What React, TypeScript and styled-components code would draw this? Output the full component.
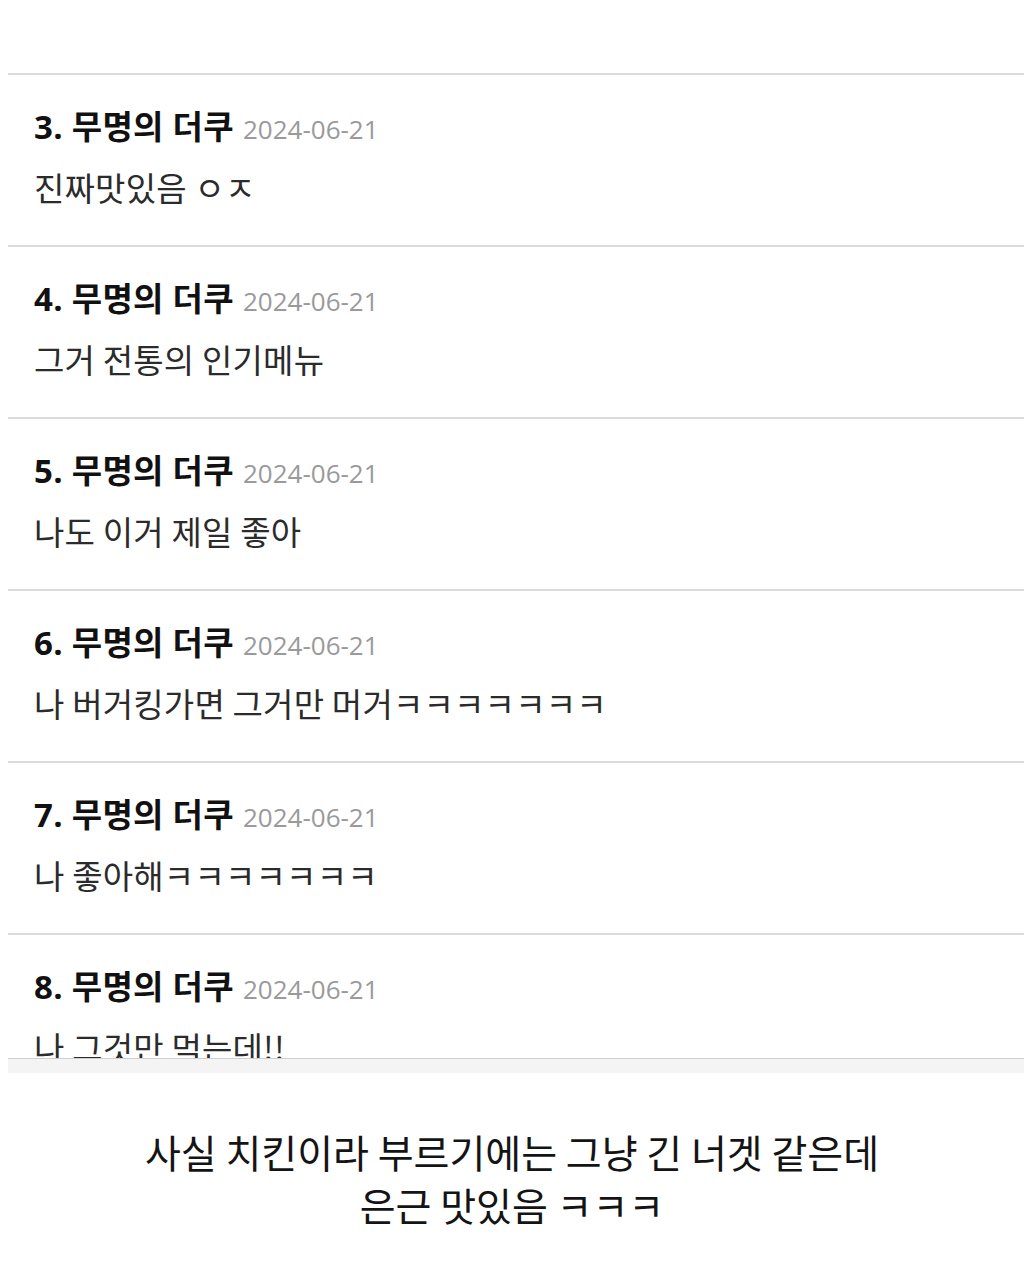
import React from "react";
import styled, { createGlobalStyle } from "styled-components";

const Global = createGlobalStyle`
  html, body { margin: 0; padding: 0; background: #ffffff; }
  body { font-family: "Open Sans", "Noto Sans CJK KR", sans-serif; }
`;

const Page = styled.div`
  width: 1024px;
  height: 1280px;
  background: #fff;
  display: flex;
  flex-direction: column;
`;

const Shot = styled.div`
  height: 1058px;
  overflow: hidden;
  padding-top: 73px;
  padding-left: 8px;
  box-sizing: border-box;
`;

const Comment = styled.div`
  height: 172px;
  box-sizing: border-box;
  border-top: 2px solid #dcdcdc;
  padding: 32px 0 0 26px;
  display: flex;
  flex-direction: column;
  gap: 20px;
`;

const Head = styled.div`
  display: flex;
  align-items: baseline;
  gap: 9px;
  height: 40px;
  line-height: 40px;
`;

const Name = styled.span`
  font-family: "Open Sans", "Noto Sans CJK KR", sans-serif;
  font-weight: 700;
  font-size: 33px;
  color: #111;
  letter-spacing: 0.3px;
`;

const DateText = styled.span`
  font-family: "Open Sans", "Noto Sans", sans-serif;
  font-size: 26px;
  color: #9a9a9a;
`;

const Body = styled.div`
  font-family: "Noto Sans CJK KR", sans-serif;
  font-size: 33px;
  line-height: 40px;
  letter-spacing: 0.2px;
  color: #2b2b2b;
  white-space: nowrap;
`;

const Band = styled.div`
  margin-left: 8px;
  height: 14px;
  border-top: 1px solid #cfcfcf;
  background: #f4f4f4;
`;

const Caption = styled.div`
  margin-top: 52px;
  text-align: center;
  font-family: "Noto Sans CJK KR", sans-serif;
  font-size: 39px;
  line-height: 53px;
  color: #141414;
`;

const comments = [
  { n: 3, text: "진짜맛있음 ㅇㅈ" },
  { n: 4, text: "그거 전통의 인기메뉴" },
  { n: 5, text: "나도 이거 제일 좋아" },
  { n: 6, text: "나 버거킹가면 그거만 머거ㅋㅋㅋㅋㅋㅋㅋ" },
  { n: 7, text: "나 좋아해ㅋㅋㅋㅋㅋㅋㅋ" },
  { n: 8, text: "나 그것만 먹는데!!" },
];

export default function App() {
  return (
    <>
      <Global />
      <Page>
        <Shot>
          {comments.map((c) => (
            <Comment key={c.n}>
              <Head>
                <Name>{c.n}. 무명의 더쿠</Name>
                <DateText>2024-06-21</DateText>
              </Head>
              <Body>{c.text}</Body>
            </Comment>
          ))}
        </Shot>
        <Band />
        <Caption>
          사실 치킨이라 부르기에는 그냥 긴 너겟 같은데
          <br />
          은근 맛있음 ㅋㅋㅋ
        </Caption>
      </Page>
    </>
  );
}
